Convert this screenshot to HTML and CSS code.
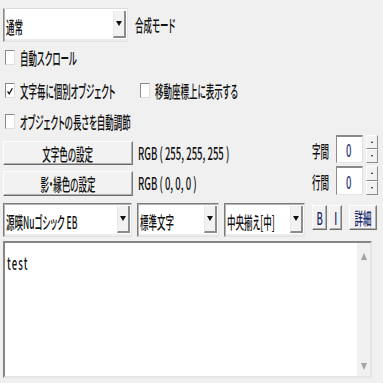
FILE: index.html
```html
<!DOCTYPE html>
<html lang="ja">
<head>
<meta charset="utf-8">
<link rel="stylesheet" href="styles.css">
</head>
<body>
<div class="panel">
  <div class="row row-blend">
    <div class="select select-blend">
      <span class="select-val"><span class="tx">通常</span></span>
      <span class="select-btn"><span class="tri"></span></span>
    </div>
    <span class="tx label-blend">合成モード</span>
  </div>

  <div class="row row-check r1">
    <label class="check"><span class="box"></span><span class="tx">自動スクロール</span></label>
  </div>
  <div class="row row-check r2">
    <label class="check check-wide"><span class="box"><svg viewBox="0 0 10 14" width="10" height="14"><path d="M2 7.5 L4 10.5 L8 3.5" fill="none" stroke="#111" stroke-width="1.6"/></svg></span><span class="tx">文字毎に個別オブジェクト</span></label>
    <label class="check"><span class="box"></span><span class="tx">移動座標上に表示する</span></label>
  </div>
  <div class="row row-check r3">
    <label class="check"><span class="box"></span><span class="tx">オブジェクトの長さを自動調節</span></label>
  </div>

  <div class="row row-color c1">
    <div class="btn btn-color"><span class="tx tc">文字色の設定</span></div>
    <span class="rgb"><span class="tx lat">RGB ( 255, 255, 255 )</span></span>
    <div class="spin">
      <span class="tx spin-label">字間</span>
      <div class="spin-edit"><span class="tx lat">0</span></div>
      <div class="spin-btns"><div class="sb"><span class="mini up"></span></div><div class="sb"><span class="mini down"></span></div></div>
    </div>
  </div>
  <div class="row row-color c2">
    <div class="btn btn-color"><span class="tx tc">影・縁色の設定</span></div>
    <span class="rgb"><span class="tx lat">RGB ( 0, 0, 0 )</span></span>
    <div class="spin">
      <span class="tx spin-label">行間</span>
      <div class="spin-edit"><span class="tx lat">0</span></div>
      <div class="spin-btns"><div class="sb"><span class="mini up"></span></div><div class="sb"><span class="mini down"></span></div></div>
    </div>
  </div>

  <div class="row row-font">
    <div class="select select-font">
      <span class="select-val"><span class="tx">源暎Nuゴシック EB</span></span>
      <span class="select-btn"><span class="tri"></span></span>
    </div>
    <div class="select select-style">
      <span class="select-val"><span class="tx">標準文字</span></span>
      <span class="select-btn"><span class="tri"></span></span>
    </div>
    <div class="select select-align">
      <span class="select-val"><span class="tx">中央揃え[中]</span></span>
      <span class="select-btn"><span class="tri"></span></span>
    </div>
    <div class="btn btn-small btn-b"><span class="tx lat tc blue">B</span></div>
    <div class="btn btn-small btn-i"><span class="tx lat tc blue">I</span></div>
    <div class="btn btn-small btn-detail"><span class="tx tc blue">詳細</span></div>
  </div>

  <div class="memo">
    <div class="memo-text"><span class="tx lat memo-tx">test</span></div>
    <div class="memo-scroll"><span class="arr arr-up"></span><span class="arr arr-down"></span></div>
  </div>
</div>
</body>
</html>
```

FILE: styles.css
```css
* { box-sizing: border-box; }
html, body { margin: 0; padding: 0; }
body {
  width: 383px;
  height: 383px;
  overflow: hidden;
  background: #f0f0f0;
  font-family: "Noto Sans CJK JP", "Noto Sans", sans-serif;
  font-size: 17px;
  font-weight: 500;
  color: #111;
  font-feature-settings: "palt";
}
.panel {
  padding: 0 0 0 3px;
  display: flex;
  flex-direction: column;
}
.row { display: flex; }

.tx {
  display: inline-block;
  white-space: nowrap;
  transform: scaleX(0.5);
  transform-origin: left center;
  line-height: 1;
}
.tx.lat { transform: scaleX(0.56); }
.tx.tc { transform-origin: center center; }
.blue { color: #1a2a6a; }

/* select boxes */
.select {
  display: flex;
  height: 34px;
  background: #fff;
  border: 1px solid;
  border-color: #dcdcdc #e6e6e6 #e2e2e2 #8a8a8a;
  box-shadow: inset 1px 0 0 #b4b4b4, inset 0 -2px 0 #ececec;
  align-items: stretch;
}
.select-val {
  flex: 1;
  display: flex;
  align-items: center;
  padding: 2px 0 0 2px;
  overflow: hidden;
}
.select-btn {
  width: 13px;
  margin: 2px 1px 3px 0;
  background: #f2f2f2;
  border-right: 2px solid #8c8c8c;
  border-bottom: 2px solid #8c8c8c;
  border-left: 1px solid #e8e8e8;
  display: flex;
  align-items: center;
  justify-content: center;
}
.tri {
  width: 0; height: 0;
  border-left: 3px solid transparent;
  border-right: 3px solid transparent;
  border-top: 5px solid #111;
}

.row-blend { margin-top: 8px; height: 34px; align-items: flex-start; }
.select-blend { width: 125px; }
.label-blend { margin: 8px 0 0 7px; }

/* checkboxes */
.row-check { align-items: center; padding-left: 2px; }
.r1 { height: 31px; }
.r2 { height: 35px; }
.r3 { height: 26px; }
.check { display: flex; align-items: center; }
.check-wide { width: 135px; }
.box {
  width: 10px;
  height: 15px;
  margin-right: 5px;
  background: #fff;
  border: 1px solid;
  border-color: #8a8a8a #dedede #dedede #8a8a8a;
  display: flex;
  align-items: center;
  justify-content: center;
}
.box svg { display: block; }

/* colour rows */
.row-color { align-items: flex-start; padding-right: 5px; }
.c1 { margin-top: 1px; height: 29px; }
.c2 { margin-top: 2px; height: 30px; }
.btn {
  background: #f2f2f2;
  border: 1px solid;
  border-color: #fdfdfd #7a7a7a #6c6c6c #fdfdfd;
  box-shadow: inset -1px -1px 0 #b0b0b0;
  display: flex;
  align-items: center;
  justify-content: center;
}
.btn-color { width: 130px; height: 24px; }
.c1 .btn-color { margin-top: 6px; }
.c2 .btn-color { margin-top: 5px; height: 25px; }
.rgb {
  height: 22px;
  display: flex;
  align-items: center;
  margin-left: 5px;
}
.c1 .rgb { margin-top: 6px; }
.c2 .rgb { margin-top: 5px; }

.spin { margin-left: auto; display: flex; align-items: flex-start; height: 29px; }
.spin-label { margin-top: 7px; width: 24px; }
.spin-edit {
  width: 27px;
  height: 28px;
  background: #fff;
  border: 1px solid;
  border-top: 2px solid #8a8a8a;
  border-color: #8a8a8a #e0e0e0 #e6e6e6 #8a8a8a;
  display: flex;
  align-items: center;
  padding-left: 9px;
  color: #2a3a7a;
}
.c2 .spin-edit { height: 29px; }
.spin-btns {
  margin-left: 3px;
  width: 12px;
  display: flex;
  flex-direction: column;
}
.sb {
  height: 14px;
  background: #f2f2f2;
  border: 1px solid;
  border-color: #fdfdfd #8a8a8a #8a8a8a #fdfdfd;
  display: flex;
  align-items: center;
  justify-content: center;
}
.c2 .sb { height: 14.5px; }
.mini { width: 0; height: 0; border-left: 1.5px solid transparent; border-right: 1.5px solid transparent; }
.mini.up { border-bottom: 2px solid #111; }
.mini.down { border-top: 2px solid #111; }

/* font row */
.row-font { margin-top: 7px; height: 34px; align-items: flex-start; }
.row-font .select {
  border-color: #7c7c7c #e6e6e6 #e2e2e2 #7c7c7c;
  box-shadow: inset 1px 1px 0 #b4b4b4, inset 0 -2px 0 #ececec;
}
.select-font { width: 129px; }
.select-style { width: 82px; margin-left: 5px; }
.select-align { width: 81px; margin-left: 5px; }
.btn-small { height: 25px; margin-top: 2px; }
.btn-b { width: 15px; margin-left: 7px; }
.btn-i { width: 13px; margin-left: 2px; }
.btn-detail { width: 28px; margin-left: 7px; }

/* memo */
.memo {
  margin-top: 4px;
  width: 369px;
  height: 137px;
  background: #fff;
  border-top: 2px solid #858585;
  border-left: 2px solid #858585;
  border-right: 2px solid #e4e4e4;
  border-bottom: 2px solid #e6e6e6;
  display: flex;
}
.memo-text { flex: 1; padding: 7px 0 0 2px; }
.memo-tx { letter-spacing: 2px; font-size: 17px; }
.memo-scroll {
  width: 13px;
  background: #f0f0f0;
  display: flex;
  flex-direction: column;
  justify-content: space-between;
  align-items: center;
  padding: 10px 0 6px;
}
.arr { width: 0; height: 0; border-left: 3.5px solid transparent; border-right: 3.5px solid transparent; }
.arr-up { border-bottom: 7px solid #a3a3a3; }
.arr-down { border-top: 7px solid #a3a3a3; }
```
